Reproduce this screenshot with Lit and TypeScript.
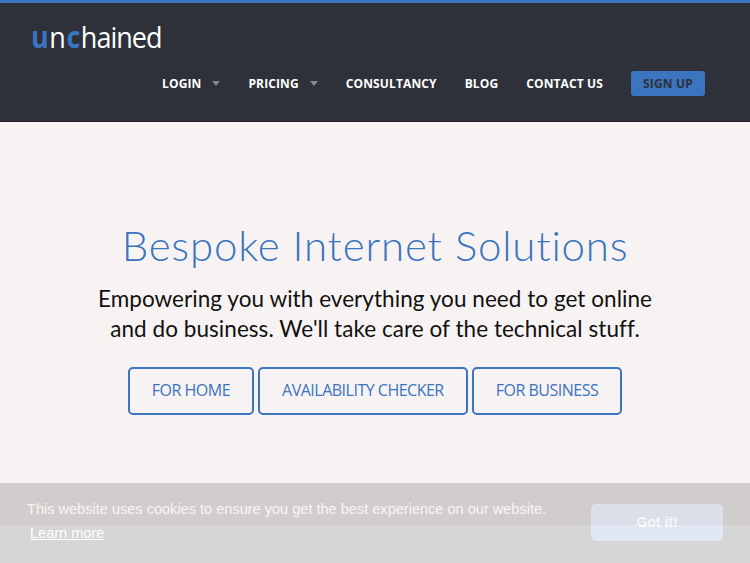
import { LitElement, html, css } from "lit";
import { customElement } from "lit/decorators.js";

const NAV = [
  { label: "Login", caret: true },
  { label: "Pricing", caret: true },
  { label: "Consultancy", caret: false },
  { label: "Blog", caret: false },
  { label: "Contact Us", caret: false },
];

const HERO_LINKS = ["For Home", "Availability Checker", "For Business"];

@customElement("app-root")
export class AppRoot extends LitElement {
  static styles = css`
    :host {
      display: block;
      position: relative;
      width: 750px;
      height: 563px;
      overflow: hidden;
      background: #fdfdfd;
      font-family: "Open Sans", sans-serif;
    }

    .top {
      height: 119px;
      border-top: 3px solid #3b74bf;
      background: #2e3139;
      box-shadow: inset 0 -1px 0 #24262c;
      display: flex;
      flex-direction: column;
      padding: 0 45px 0 31px;
    }

    .logo {
      margin-top: 16px;
      height: 36px;
      font-family: "Open Sans", sans-serif;
      font-size: 30px;
      font-weight: 500;
      line-height: 36px;
      color: #fff;
      letter-spacing: -1.1px;
      /* the wordmark is narrower than any installed face */
      transform: scaleX(0.9);
      transform-origin: left center;
    }

    .logo b,
    .logo .n {
      letter-spacing: 0.6px;
    }

    .logo b {
      font-weight: 700;
      color: #3b74bf;
    }

    .logo .n {
      color: #fff;
    }

    nav {
      display: flex;
      justify-content: flex-end;
      align-items: center;
      margin-top: 16px;
    }

    .item {
      display: flex;
      align-items: center;
      margin-left: 28px;
      font-size: 12px;
      font-weight: 700;
      line-height: 25px;
      color: #fff;
      text-transform: uppercase;
      letter-spacing: 0.12px;
    }

    .caret {
      width: 0;
      height: 0;
      margin-left: 11px;
      border-style: solid;
      border-width: 5px 4.5px 0;
      border-color: #85878b transparent transparent;
    }

    .signup {
      margin-left: 28px;
      width: 74px;
      height: 25px;
      border-radius: 3px;
      background: #3b74bf;
      color: #2e3139;
      font-size: 12px;
      font-weight: 700;
      line-height: 26px;
      text-align: center;
      text-transform: uppercase;
      letter-spacing: 0.2px;
    }

    .hero {
      height: 403px;
      background: #f7f3f2;
      display: flex;
      flex-direction: column;
      align-items: center;
      padding-top: 95px;
      box-sizing: border-box;
    }

    h1 {
      margin: 0;
      font-family: "Lato", sans-serif;
      font-size: 42px;
      font-weight: 300;
      line-height: 56px;
      color: #3b74bf;
      letter-spacing: 0.8px;
    }

    .lead {
      margin: 11px 0 0;
      font-family: "Lato", sans-serif;
      font-size: 22.5px;
      font-weight: 400;
      line-height: 30px;
      color: #111;
      text-align: center;
      letter-spacing: 0.05px;
    }

    .links {
      display: flex;
      gap: 4px;
      margin-top: 23px;
    }

    .links a {
      box-sizing: border-box;
      height: 48px;
      padding: 0 22px;
      border: 2px solid #3b74bf;
      border-radius: 5px;
      font-size: 16px;
      line-height: 42px;
      letter-spacing: -0.5px;
      color: #3b74bf;
      text-transform: uppercase;
    }

    .cookie {
      position: absolute;
      left: 0;
      right: 0;
      bottom: 0;
      height: 80px;
      box-sizing: border-box;
      padding: 14px 27px 0;
      display: flex;
      justify-content: space-between;
      background: #000;
      opacity: 0.15;
      color: #fff;
      font-family: "Liberation Sans", Arial, sans-serif;
      font-size: 14.55px;
      line-height: 24px;
      white-space: nowrap;
    }

    .cookie a {
      display: inline-block;
      padding: 0 3px;
      color: #fff;
      text-decoration: underline;
    }

    .got {
      box-sizing: border-box;
      width: 132px;
      height: 37px;
      margin: 7px 0 0;
      border-radius: 5px;
      background: #3b74bf;
      font-size: 14px;
      font-weight: 700;
      line-height: 37px;
      text-align: center;
    }
  `;

  render() {
    return html`
      <header class="top">
        <div class="logo"><b>u</b><span class="n">n</span><b>c</b>hained</div>
        <nav>
          ${NAV.map(
            (n) => html`<div class="item">
              ${n.label}${n.caret ? html`<span class="caret"></span>` : ""}
            </div>`
          )}
          <div class="signup">Sign Up</div>
        </nav>
      </header>
      <section class="hero">
        <h1>Bespoke Internet Solutions</h1>
        <p class="lead">
          Empowering you with everything you need to get online<br />
          and do business. We'll take care of the technical stuff.
        </p>
        <div class="links">
          ${HERO_LINKS.map((l) => html`<a>${l}</a>`)}
        </div>
      </section>
      <div class="cookie">
        <div>
          This website uses cookies to ensure you get the best experience on our website.<br />
          <a>Learn more</a>
        </div>
        <div class="got">Got it!</div>
      </div>
    `;
  }
}
